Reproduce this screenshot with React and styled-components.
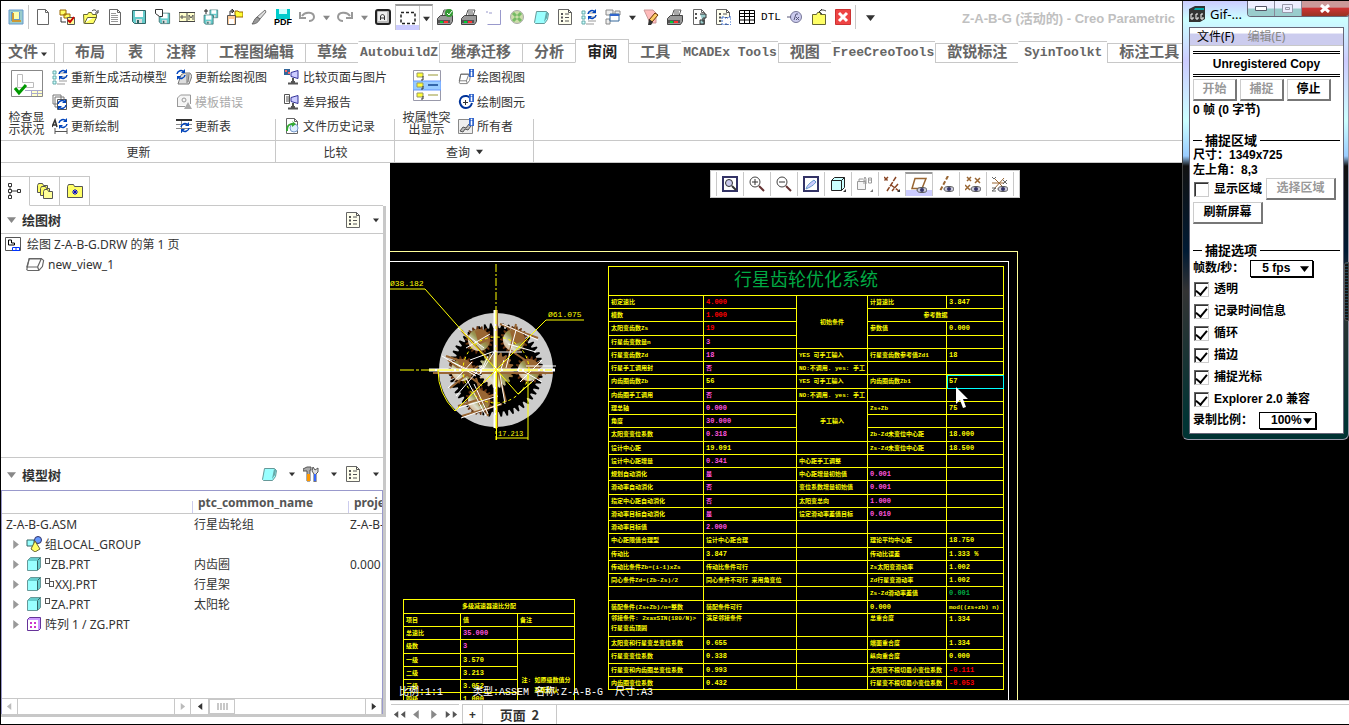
import React from 'react'
import styled, { createGlobalStyle, css } from 'styled-components'

const line = '#c8c8c8'
const yellow = '#ffff00'
const magenta = '#ff55dd'

const GlobalStyle = createGlobalStyle`
  * {
    box-sizing: border-box;
  }
  body {
    margin: 0;
    background: #fff;
    color: #333;
    font-family: "Noto Sans", "Noto Sans CJK SC", sans-serif;
    font-size: 12px;
  }
  button, input, select {
    font: inherit;
    color: inherit;
    margin: 0;
  }
  button {
    padding: 0;
    border: 0;
    background: none;
  }
`

const AppStyles = styled.div`
  position: relative;
  display: flex;
  flex-direction: column;
  min-height: 100vh;
  border: 1px solid #000;
  border-right: 0;
  overflow: hidden;
`

/* ---------- icons ---------- */

const page = (
  <path d="M2.5 .5h8l3 3v12h-11zM10.500 .5v3h3" fill="#fff" stroke="#666" />
)
const sync = (x, y) => (
  <g transform={`translate(${x} ${y})`} fill="none" stroke="#0044bb" strokeWidth="1.500">
    <path d="M1 5a4 4 0 0 1 7-2M9 6a4 4 0 0 1-7 2" />
    <path d="M9 0v4h-4zM1 11v-4h4z" fill="#0044bb" stroke="none" />
  </g>
)
const printer = (
  <>
    <path d="M5 7l2-6h7l-2 6" fill="#fff" stroke="#555" />
    <path d="M7 3h5M7 5h5" stroke="#555" />
    <path d="M.5 9.500l3-3h12v6l-2 3h-13z" fill="#999" stroke="#444" />
    <path d="M1 11h12v3h-12z" fill="#555" />
    <path d="M3 12h3v2h-3z" fill="#00cc33" />
    <path d="M7 12h4v2h-4z" fill="#ff3333" />
  </>
)
const disk = (
  <>
    <path d="M1.500 1.500h13v13h-11l-2-2z" fill="#66cccc" stroke="#336666" />
    <path d="M4 2h8v6h-8z" fill="#fff" />
    <path d="M5 10h6v4h-6z" fill="#ddd" />
    <path d="M6 11h2v3h-2z" fill="#336666" />
  </>
)
const folder = (
  <path d="M1 14.500l-.5-9h4l1-2h3l1 2h4v3h-9l-3 6h9l3-6h-3" fill="#ffff66" stroke="#666633" />
)
const cube = (
  <>
    <path d="M1.500 4.500l3-3h10v10l-3 3h-10z" fill="#66cccc" stroke="#669999" />
    <path d="M2 5h9v9h-9z" fill="#99ffff" />
    <path d="M11.500 4.500l3-3M11.500 5v9" stroke="#336666" />
  </>
)
const slab = (
  <>
    <path d="M1.500 13.500l2-11h10l2 2-1 6-3 4h-9z" fill="#fff" stroke="#666" />
    <path d="M3.500 3l-2 8h9l3-8zM10.500 11l1 3" fill="none" stroke="#666" />
  </>
)
const info = (
  <>
    <path d="M11 0h5v8h-5z" fill="#3366cc" />
    <path d="M13 1h1v1h-1zM13 3h1v4h-1z" fill="#fff" stroke="#fff" strokeWidth=".5" />
  </>
)
const list = (
  <>
    <path d="M1.500 .5h10l3 3v12h-13z" fill="#ffffee" stroke="#666" />
    <path d="M11.500 .5v3h3M8 5h4M8 8.500h4M8 12h4" fill="none" stroke="#555" />
    <path d="M4 4h2v2h-2zM4 7.500h2v2h-2zM4 11h2v2h-2z" fill="#555" />
  </>
)
const eye = (
  <>
    <ellipse cx="11" cy="13" rx="5" ry="2.500" fill="#ccccdd" stroke="#555" />
    <circle cx="11" cy="13" r="2" fill="#333366" />
  </>
)
const monitor = (
  <>
    <path d="M7 3.500l7-2v8l-7-2z" fill="#ccccff" stroke="#333399" />
    <path d="M9 9v4M4 14.500h10M7 13h4" stroke="#555" strokeWidth="2" />
  </>
)
const checkList = (
  <>
    <path d="M7 4h8M7 8h8M7 12h8M5 15h8" stroke="#999" />
    <path d="M1 2h3v3h-3zM1 7h3v3h-3zM1 12h3v3h-3z" fill="#ccffff" stroke="#66aaaa" />
  </>
)

const icons = {
  app: (
    <>
      <path d="M1 1h14v14h-14z" fill="#99cccc" stroke="#6699cc" />
      <path d="M3 3h9v9h-9z" fill="#6699cc" />
      <path d="M5 3h6v7h-6z" fill="#ffffaa" />
      <path d="M4 4h2v7h7v2h-9z" fill="#cc9933" />
    </>
  ),
  page,
  check2: (
    <>
      <path d="M1 1h6v5h-6zM5 5h6v4h-6z" fill="#ffff66" stroke="#996600" />
      <path d="M2 8v5h5" fill="none" stroke="#333" />
      <path d="M8.500 8.500h7v7h-7z" fill="#ffff99" stroke="#555" />
      <path d="M9 11l2 2 4-5" fill="none" stroke="#cc0000" strokeWidth="2" />
    </>
  ),
  open: (
    <>
      {folder}
      <path d="M9 2c2-2 4-1 5 1M15 1v3h-3" fill="none" stroke="#333" />
    </>
  ),
  text: (
    <>
      {page}
      <path d="M4 4.500h5M4 6.500h7M4 8.500h7M4 10.500h7M4 12.500h7" stroke="#999" />
    </>
  ),
  disk,
  saveAs: (
    <>
      <g transform="translate(3 3) scale(.8)">{disk}</g>
      <path d="M.5 .5h7v7h-3l-4-3z" fill="#fff" stroke="#333" />
    </>
  ),
  model: (
    <>
      <path d="M0 3.500h16v9h-16zM8 4v9" fill="#ffffcc" stroke="#444" />
      <path d="M1 8h6M3 6v4M10 11v-5l2 3 2-3v5" fill="none" stroke="#555" />
    </>
  ),
  backup: (
    <>
      <g transform="translate(6 0) scale(.6)">{disk}</g>
      <g transform="translate(0 5) scale(.7)">{disk}</g>
      <path d="M3 0v5M1 2h4" stroke="#222" />
    </>
  ),
  export: (
    <>
      <path d="M8 2h3l1 1h4v5h-8z" fill="#ffff33" stroke="#996600" />
      <path d="M.5 6.500h8v9h-8z" fill="#ffcc99" stroke="#555" />
      <path d="M3 6v-4h3M5 0v4l2-2z" fill="none" stroke="#333" />
      <path d="M2 10h5v5h-5z" fill="#fff" />
    </>
  ),
  brush: (
    <>
      <path d="M14 1l1 2-6 7-3-2z" fill="#ddd" stroke="#777" />
      <path d="M6 8l3 2c-2 4-5 5-8 5 2-2 2-5 5-7z" fill="#999" stroke="#666" />
    </>
  ),
  undo: <path d="M3 7c3-5 12-4 12 1 0 3-3 4-5 4M1 3v6h6" fill="none" stroke="#999" strokeWidth="2" />,
  redo: <path d="M13 7c-3-5-12-4-12 1 0 3 3 4 5 4M15 3v6h-6" fill="none" stroke="#999" strokeWidth="2" />,
  key: (
    <>
      <rect x="1" y="1" width="14" height="14" rx="2" fill="#bbb" stroke="#222" strokeWidth="2" />
      <rect x="3" y="3" width="9" height="9" fill="#eee" />
      <path d="M5.500 11v-4l2-2 2 2v4M6 9h4" fill="none" stroke="#333" />
    </>
  ),
  marquee: <path d="M1 2.500h14v11h-14z" fill="none" stroke="#222" strokeWidth="1.500" strokeDasharray="3 2" />,
  printer,
  printOk: (
    <>
      {printer}
      <circle cx="12" cy="4" r="4" fill="#339933" />
      <path d="M10 4l2 2 3-4" fill="none" stroke="#fff" />
    </>
  ),
  blank: <path d="M1 3h2M4 4h3M15.500 1v14.500h-13" fill="none" stroke="#9999cc" />,
  ball: (
    <>
      <circle cx="8" cy="8" r="6.500" fill="#ccddaa" stroke="#aaa" />
      <path d="M4 4l3 3M12 4l-3 3M4 12l3-3M12 12l-3-3" stroke="#77bb66" strokeWidth="3" />
    </>
  ),
  slabBlue: (
    <>
      <path d="M1.500 13.500l2-11h10l2 2-1 6-3 4h-9z" fill="#99ffff" stroke="#669999" />
      <path d="M13 3l-2 10 3-4 1-5z" fill="#66aaaa" />
    </>
  ),
  list,
  regen: (
    <>
      {checkList}
      {sync(6, 0)}
    </>
  ),
  windows: (
    <>
      <path d="M1 1h7v5h-7zM10 2h5v4h-5zM1 10h4v5h-4z" fill="#eee" stroke="#888" />
      <path d="M5 5h9v7h-9z" fill="#fff" stroke="#336699" />
      <path d="M5 5h9v2h-9z" fill="#3366cc" />
    </>
  ),
  eraser: (
    <>
      <path d="M1 1h9l3 3v10h-6z" fill="#ffbbbb" stroke="#cc9999" />
      <path d="M12 4l3 2-6 7-3-2z" fill="#ffcc66" stroke="#663300" />
      <path d="M6 10l4 3-2 3h-3z" fill="#333" />
    </>
  ),
  docTool: (
    <>
      {page}
      <path d="M4 4h2v2h-2zM4 8h2v2h-2z" fill="#555" />
      <path d="M9 5h6v4h-3v4M9 11h4v4h-4z" fill="#99cccc" stroke="#333" />
    </>
  ),
  docShape: (
    <>
      {list}
      <path d="M7 8h3v1h3v-1h3v8h-3v-1h-3v1h-3z" fill="#fff" stroke="#3366cc" strokeDasharray="2 1" />
    </>
  ),
  grid: <path d="M.5 1.500h15v13h-15zM.5 4.500h15M.5 7.500h15M.5 11h15M5.500 1.500v13M10.500 1.500v13" fill="#fff" stroke="#000" />,
  gauge: (
    <>
      <circle cx="9" cy="8" r="5.500" fill="#ccccee" stroke="#777799" />
      <path d="M0 8h4M7 11l2-6h2M9 8l3 3M12 8l-3 3" fill="none" stroke="#555577" />
    </>
  ),
  folderBack: (
    <>
      <path d="M1.500 5.500h4l1-2h3v2h5v10h-13z" fill="#ffff66" stroke="#666633" />
      <path d="M8 3c2-3 5-2 7-1M11 0l-3 3 3 2" fill="none" stroke="#333" />
    </>
  ),
  close: (
    <>
      <path d="M.5 .5h15v15h-15z" fill="#ee4444" stroke="#cc3333" />
      <path d="M4 4l8 8M12 4l-8 8" stroke="#fff" strokeWidth="3" />
    </>
  ),
  updateSheet: (
    <>
      <path d="M1 1h8v9h-8zM3 3h9v10h-9z" fill="#fff" stroke="#777" />
      <path d="M5.500 5.500h9v10h-9z" fill="#fff" stroke="#555" />
      {sync(5, 5)}
    </>
  ),
  updateDraft: (
    <>
      <path d="M0 9l3-7 2 7M1 7h4" fill="none" stroke="#333" strokeWidth="1.500" />
      {sync(6, 0)}
      <path d="M3 10v6M15 10v6M3 13.500h12" fill="none" stroke="#555" />
    </>
  ),
  updateView: (
    <>
      <path d="M5 6l3-2h6l2 3-3 8h-11z" fill="#ddd" stroke="#777" />
      <path d="M11 5v9M13 5l-1 8" stroke="#777" />
      {sync(0, 0)}
    </>
  ),
  tplError: (
    <>
      <path d="M1.500 12v-8l3-3h10v9" fill="#f5f5f5" stroke="#999" />
      <path d="M1 12.500h8" stroke="#999" />
      <circle cx="8" cy="6" r="2" fill="none" stroke="#999" />
      <path d="M12 8l4 7h-8z" fill="#aaa" />
    </>
  ),
  updateTable: (
    <>
      <path d="M0 2.500h16M0 6.500h16M0 10.500h16M5.500 2v13" stroke="#888" />
      <path d="M0 1h16v2h-16z" fill="#333" />
      {sync(4, 4)}
    </>
  ),
  comparePic: (
    <>
      {monitor}
      <path d="M0 0h6v6h-6z" fill="#336699" />
      <path d="M1 1h2v2h-2zM4 3h2v2h-2z" fill="#ff6666" />
    </>
  ),
  diff: (
    <>
      {monitor}
      <path d="M.5 .5h5v9h-5z" fill="#fff" stroke="#555" />
      <path d="M2 3h3M2 5h3M2 7h3" stroke="#555" />
    </>
  ),
  history: (
    <>
      {page}
      <circle cx="10" cy="10" r="4" fill="#ddeeff" stroke="#7799cc" />
      <path d="M2 13c0-6 3-8 7-8l-1-2 4 3-4 3v-2c-3 0-4 2-4 6z" fill="#33aa33" />
    </>
  ),
  viewInfo: (
    <>
      <g transform="translate(0 3) scale(.8)">{slab}</g>
      {info}
    </>
  ),
  draftInfo: (
    <>
      <path d="M12 4c-1-2-5-3-8-1-4 3-2 11 4 11 3 0 5-2 6-5" fill="none" stroke="#003399" strokeWidth="2" />
      <path d="M5 8.500h5M7.500 6v5" stroke="#333" />
      {info}
    </>
  ),
  ownerInfo: (
    <>
      <path d="M.5 1.500h14v14h-14z" fill="#eee" stroke="#888" />
      <path d="M2 13l3-4 3 1 3-4 2 2-3 4-3-1-2 3z" fill="#bbb" stroke="#555" />
      {info}
    </>
  ),
  structure: (
    <path d="M1.500 .5h3v3h-3zM1.500 6.500h3v3h-3zM1.500 12.500h3v3h-3zM10.500 6.500h3v3h-3zM3 4v2M3 10v2M5 8h5" fill="#fff" stroke="#333" />
  ),
  folders: (
    <>
      <path d="M.5 2.500l1-2h4l1 2h4v7h-10z" fill="#ffff66" stroke="#555" />
      <path d="M3.500 5.500l1-2h4l1 2h3v7h-9z" fill="#ffff66" stroke="#555" />
      <path d="M6.500 8.500l1-2h3l1 2h4v7h-9z" fill="#ffff99" stroke="#555" />
    </>
  ),
  favorite: (
    <>
      <path d="M.5 3.500l1-2h5l1 2h8v11h-15z" fill="#ffff66" stroke="#555" />
      <path d="M8 6v6M5 9h6M6 7l4 4M10 7l-4 4" stroke="#0000cc" />
    </>
  ),
  drawing: (
    <>
      <path d="M.5 1.500h15v13h-15z" fill="#fff" stroke="#555" />
      <path d="M3.500 4v5h6v-2h-3v-3z" fill="none" stroke="#000" />
      <path d="M7.500 11.500h7v3h-7zM11 11v3" fill="none" stroke="#0033ff" />
    </>
  ),
  slab: <g transform="scale(1.200 1)">{slab}</g>,
  cube,
  group: (
    <>
      <path d="M1 4h7v6h-7z" fill="#99ffff" stroke="#336666" />
      <circle cx="12" cy="4" r="3.500" fill="#6699ff" stroke="#336" />
      <path d="M9 5l5 8-5 3-4-3z" fill="#ffff66" stroke="#663" />
    </>
  ),
  pattern: (
    <>
      <path d="M1.500 3.500l2-2h11v11l-2 2h-11z" fill="#cc99ff" stroke="#663399" />
      <path d="M2 4h10v10h-10z" fill="#fff" />
      <path d="M4 6h2v2h-2zM8 6h2v2h-2zM4 10h2v2h-2zM8 10h2v2h-2z" fill="#cc33cc" />
    </>
  ),
  tools: (
    <>
      <path d="M0 3l4-2h4v3h-1v11h-3v-10h-4z" fill="#aaa" stroke="#555" />
      <path d="M4 8h3v7h-3z" fill="#ff9900" />
      <path d="M10 1l2 3 3-2v4l-2 2v8h-2v-8l-2-3z" fill="#ddd" stroke="#555" />
      <path d="M11 8h2v7h-2z" fill="#3366ff" />
    </>
  ),
  zoomFit: (
    <>
      <path d="M1 1h14v14h-14z" fill="#fff" stroke="#336" strokeWidth="2" />
      <circle cx="7" cy="7" r="3.500" fill="#cce" stroke="#333" />
      <path d="M10 10l4 4" stroke="#333" strokeWidth="2" />
    </>
  ),
  zoomIn: (
    <>
      <circle cx="6" cy="6" r="5" fill="#fff" stroke="#444" />
      <path d="M3 6h6M6 3v6" stroke="#333" />
      <path d="M10 10l5 5" stroke="#663333" strokeWidth="2" />
    </>
  ),
  zoomOut: (
    <>
      <circle cx="6" cy="6" r="5" fill="#fff" stroke="#444" />
      <path d="M3 6h6" stroke="#333" />
      <path d="M10 10l5 5" stroke="#663333" strokeWidth="2" />
    </>
  ),
  repaint: (
    <>
      <path d="M1 1h14v14h-14z" fill="#fff" stroke="#333366" strokeWidth="2" />
      <path d="M3 13c1-4 4-6 8-9l2 2c-3 4-6 5-10 7z" fill="#ccccff" stroke="#6699cc" />
    </>
  ),
  display: (
    <>
      <path d="M1.500 4.500l3-3h10v10l-3 3h-10zM1.500 4.500h10v10M11.500 4.500l3-3" fill="#ccffff" stroke="#222" />
      <path d="M16 13v3h-3z" fill="#333" />
    </>
  ),
  annotation: (
    <>
      <path d="M.5 5.500h8v8h-8zM2 5v-2h4" fill="#f5f5f5" stroke="#999" />
      <path d="M7 8v-5l1-2 1 2v5M7 5h2M11.500 2v5h3v-5zM11.500 4h3" fill="none" stroke="#999" />
      <path d="M16 13v3h-3z" fill="#777" />
    </>
  ),
  datum: (
    <>
      <path d="M0 1l4 4M4 1l-4 4M7 9l8 6M14 8l-6 7M12 1l-9 14" stroke="#884422" strokeWidth="1.500" strokeDasharray="5 1" />
      <path d="M16 13v3h-3z" fill="#333" />
    </>
  ),
  plane: (
    <>
      <path d="M4 1.500h11l-4 10h-10z" fill="none" stroke="#996633" strokeWidth="1.500" />
      {eye}
    </>
  ),
  axis: (
    <>
      <path d="M10 0l-8 15" stroke="#996633" strokeWidth="2" strokeDasharray="4 2" />
      {eye}
    </>
  ),
  points: (
    <>
      <path d="M2 1l4 4M6 1l-4 4M10 2l5 5M15 2l-5 5M0 9l5 5M5 9l-5 5" stroke="#996633" strokeWidth="1.500" />
      {eye}
    </>
  ),
  csys: (
    <>
      <path d="M2 2l9 9M12 2l-10 11M0 7h12" stroke="#996633" />
      <path d="M0 1l2 2 2-2M11 4l4 4M15 4l-4 4M0 12h4l-4 3h4" fill="none" stroke="#666" />
      {eye}
    </>
  ),
  gif: (
    <>
      <path d="M0 3l6-3h10v13l-5 3h-11z" fill="#333" />
      <path d="M6 2h9v2h-10z" fill="#00aaaa" />
      <path d="M4 8h-2v5h2v-2M9 8h-2v5h2v-2M14 8h-2v5h2v-2" fill="none" stroke="#fff" />
    </>
  ),
  status: (
    <>
      <path d="M.5 .5h31v26h-31z" fill="#fff" stroke="#888" />
      <path d="M6.500 4.500h5v8h11v5h-16z" fill="none" stroke="#bbb" />
      <path d="M20 20h11v6h-11z" fill="#ffffcc" />
      <path d="M14 20.500h17M20 23.500h11M20.500 20v6M26.500 20v6" stroke="#aac" />
      <path d="M4 18l4 5 7-8" fill="none" stroke="#009900" strokeWidth="3" />
    </>
  ),
  highlight: (
    <>
      <path d="M.5 .5h27v30h-27z" fill="#fff" stroke="#99a" />
      <path d="M0 11h28v9h-28z" fill="#99ccff" stroke="#6699ff" />
      <path d="M4 3h6v4h-6zM4 13h6v4h-6zM4 23h6v4h-6z" fill="#ffff33" stroke="#996" />
      <path d="M15 5h10M15 25h10" stroke="#cccc99" strokeWidth="2" />
      <path d="M15 15h10" stroke="#3366aa" strokeWidth="2" />
      <path d="M10 6v4h-2M10 16v3h-2M10 26v3h-2" fill="none" stroke="#333" />
    </>
  ),
}

const IconStyles = styled.svg`
  display: block;
  flex: none;
`

const Icon = ({ name, width = 16, height = 16 }) => (
  <IconStyles width={width} height={height} viewBox={`0 0 ${width} ${height}`} aria-hidden="true">
    {icons[name]}
  </IconStyles>
)

const Arrow = ({ color = '#333', dir = 'down', size = 7 }) => {
  const turn = { down: 0, left: 90, up: 180, right: 270 }[dir]
  return (
    <IconStyles width={size} height={size} viewBox="0 0 8 8" aria-hidden="true">
      <path d="M0 2h8l-4 5z" fill={color} transform={`rotate(${turn} 4 4)`} />
    </IconStyles>
  )
}

/* ---------- quick access toolbar ---------- */

const QuickBar = styled.header`
  display: flex;
  align-items: center;
  height: 38px;
  padding: 0 0 6px 3px;
  white-space: nowrap;
`

const Slot = styled.button`
  display: flex;
  flex: none;
  align-items: center;
  justify-content: center;
  width: ${(props) => (props.$narrow ? 14 : 24)}px;
  height: 24px;
`

const SlotText = styled.span`
  color: #000;
  font: 11px/16px "Liberation Mono", monospace;
`

const Divider = styled.i`
  flex: none;
  width: 3px;
  height: 24px;
  border-left: 1px solid ${line};
`

const Picker = styled.div`
  display: flex;
  flex: none;
  width: 38px;
  border: 1px solid ${line};
  border-top: 2px solid #999;
  border-bottom: 0;

  button:first-child {
    width: 24px;
    background: linear-gradient(#fff 80%, #ccccff 80%);
    border-right: 1px solid ${line};
  }
  button:last-child {
    width: 12px;
  }
`

const WindowTitle = styled.h1`
  margin: 0 0 0 80px;
  font: bold 13px "Liberation Sans", "Noto Sans CJK SC", sans-serif;
  color: #c0c0c0;
`

const firstTools = ['page', 'check2', 'open', 'text', 'disk', 'saveAs', 'model', 'backup', 'export', 'brush']
const midTools = ['printOk', 'printer', 'blank', 'ball', 'slabBlue', 'list', 'regen', 'windows']
const lastTools = ['eraser', 'printer', 'docTool', 'docShape', 'grid', 'dtl', 'gauge', 'folderBack', 'close']

const Tool = ({ name }) => (
  <Slot aria-label={name}>{name === 'dtl' ? <SlotText>DTL</SlotText> : <Icon name={name} />}</Slot>
)

const PdfIcon = () => (
  <IconStyles width="18" height="18" viewBox="0 0 18 18">
    <path d="M2 1h14v10h-14z" fill="#00cccc" />
    <path d="M5 1h8v5h-8z" fill="#ccffff" />
    <text x="0" y="17" fontSize="9" fontWeight="bold" fontFamily="Liberation Sans">PDF</text>
  </IconStyles>
)

const QuickAccess = () => (
  <QuickBar>
    <Tool name="app" />
    <Divider />
    {firstTools.map((name) => <Tool key={name} name={name} />)}
    <Slot aria-label="pdf"><PdfIcon /></Slot>
    <Tool name="undo" />
    <Slot $narrow aria-label="undo list"><Arrow color="#888" /></Slot>
    <Tool name="redo" />
    <Slot $narrow aria-label="redo list"><Arrow color="#888" /></Slot>
    <Tool name="key" />
    <Picker>
      <Slot aria-label="select"><Icon name="marquee" /></Slot>
      <Slot $narrow aria-label="select list"><Arrow /></Slot>
    </Picker>
    {midTools.map((name) => <Tool key={name} name={name} />)}
    <Slot $narrow aria-label="windows list"><Arrow /></Slot>
    {lastTools.map((name) => <Tool key={name} name={name} />)}
    <Divider />
    <Slot aria-label="customize"><Arrow size={9} /></Slot>
    <WindowTitle>Z-A-B-G (活动的) - Creo Parametric</WindowTitle>
  </QuickBar>
)

/* ---------- ribbon ---------- */

const TabBar = styled.nav`
  display: flex;
  align-items: flex-end;
  height: 24px;
  overflow: hidden;
  background: linear-gradient(${line}, ${line}) left bottom / 100% 1px no-repeat;
`

const Tab = styled.button`
  display: flex;
  flex: none;
  align-items: center;
  justify-content: center;
  gap: 3px;
  height: 20px;
  padding: 2px 11px 0;
  border: solid ${line};
  border-width: 1px 0 1px 1px;
  background: #fff;
  color: #666;
  font: bold 15px/16px "Liberation Mono", "Noto Sans CJK SC", monospace;
  white-space: nowrap;

  ${(props) =>
    props.$plain &&
    css`
      height: 22px;
      padding: 2px ${props.$wide ? 5 : 1}px 0;
      border-bottom-color: #fff;
      border-left-color: #fff;
      font-size: 13px;
    `}
  ${(props) =>
    props.$active &&
    css`
      height: 24px;
      margin-right: -1px;
      padding-top: 6px;
      border-bottom-color: #fff;
      border-right-width: 1px;
      color: #222;
    `}
  ${(props) =>
    props.$file &&
    css`
      width: 54px;
      margin-right: 8px;
      padding: 2px 6px 0;
      border-width: 1px 1px 1px 0;
    `}
`

const tabs = [
  { text: '布局' },
  { text: '表' },
  { text: '注释' },
  { text: '工程图编辑' },
  { text: '草绘' },
  { text: 'AutobuildZ', plain: true },
  { text: '继承迁移' },
  { text: '分析' },
  { text: '审阅', active: true },
  { text: '工具' },
  { text: 'MCADEx Tools', plain: true },
  { text: '视图' },
  { text: 'FreeCreoTools', plain: true },
  { text: '歆锐标注' },
  { text: 'SyinToolkt', plain: true, wide: true },
  { text: '标注工具' },
]

const RibbonStyles = styled.section`
  display: flex;
  height: 100px;
  border-bottom: 1px solid ${line};
`

const Group = styled.div`
  display: flex;
  flex-direction: column;
  width: ${(props) => props.$width};
  ${(props) => props.$width === 'auto' && 'flex: 1;'}
  background: linear-gradient(${line}, ${line}) right bottom / 1px 43px no-repeat;
`

const GroupBody = styled.div`
  display: flex;
  height: 78px;
  padding-top: 2px;
  border-bottom: 1px solid ${line};
`

const GroupTitle = styled.div`
  display: flex;
  flex: 1;
  align-items: center;
  justify-content: center;
  gap: 6px;
  color: #333;
`

const BigButton = styled.button`
  display: flex;
  flex-direction: column;
  align-items: center;
  justify-content: space-between;
  width: ${(props) => props.$width}px;
  padding: 5px 0 4px;
  color: #333;
  font-size: 12px;
  line-height: 12px;
`

const ButtonColumn = styled.div`
  display: flex;
  flex-direction: column;
  justify-content: space-between;
  height: 73px;
  width: ${(props) => props.$width}px;
  padding-left: ${(props) => props.$pad || 0}px;
`

const SmallButton = styled.button`
  display: flex;
  align-items: center;
  gap: 3px;
  height: 24px;
  color: #333;
  white-space: nowrap;

  &:disabled {
    color: #aaa;
  }
`

const Commands = ({ items, width, pad }) => (
  <ButtonColumn $width={width} $pad={pad}>
    {items.map(([icon, text, disabled]) => (
      <SmallButton key={text} disabled={disabled}>
        <Icon name={icon} />
        {text}
      </SmallButton>
    ))}
  </ButtonColumn>
)

const Ribbon = () => (
  <>
    <TabBar>
      <Tab $file>
        文件
        <Arrow size={6} />
      </Tab>
      {tabs.map((tab) => (
        <Tab key={tab.text} $plain={tab.plain} $wide={tab.wide} $active={tab.active}>
          {tab.text}
        </Tab>
      ))}
    </TabBar>
    <RibbonStyles>
      <Group $width="275px">
        <GroupBody>
          <BigButton $width={51}>
            <Icon name="status" width={32} height={27} />
            <span>检查显<br />示状况</span>
          </BigButton>
          <Commands
            width={124}
            items={[['regen', '重新生成活动模型'], ['updateSheet', '更新页面'], ['updateDraft', '更新绘制']]}
          />
          <Commands
            width={100}
            items={[['updateView', '更新绘图视图'], ['tplError', '模板错误', true], ['updateTable', '更新表']]}
          />
        </GroupBody>
        <GroupTitle>更新</GroupTitle>
      </Group>
      <Group $width="119px">
        <GroupBody>
          <Commands
            width={118}
            pad={8}
            items={[['comparePic', '比较页面与图片'], ['diff', '差异报告'], ['history', '文件历史记录']]}
          />
        </GroupBody>
        <GroupTitle>比较</GroupTitle>
      </Group>
      <Group $width="139px">
        <GroupBody>
          <BigButton $width={63}>
            <Icon name="highlight" width={28} height={31} />
            <span>按属性突<br />出显示</span>
          </BigButton>
          <Commands
            width={75}
            items={[['viewInfo', '绘图视图'], ['draftInfo', '绘制图元'], ['ownerInfo', '所有者']]}
          />
        </GroupBody>
        <GroupTitle>
          查询
          <Arrow />
        </GroupTitle>
      </Group>
      <Group $width="auto">
        <GroupBody />
      </Group>
    </RibbonStyles>
  </>
)

/* ---------- left navigator ---------- */

const Workspace = styled.main`
  display: flex;
  flex: 1;
`

const Navigator = styled.aside`
  display: flex;
  flex: none;
  flex-direction: column;
  width: 389px;
  padding: 13px 4px 7px 0;
`

const NavTabs = styled.div`
  display: flex;
  height: 30px;
  background: linear-gradient(${line}, ${line}) left bottom / 382px 1px no-repeat;
`

const NavTab = styled.button`
  display: flex;
  align-items: center;
  justify-content: center;
  width: 30px;
  border: 1px solid ${line};
  border-width: 1px 1px 1px 0;
  background: #fff;
  ${(props) => props.$active && 'border-bottom-color: #fff; width: 29px;'}
`

const NavBody = styled.div`
  display: flex;
  flex: 1;
  flex-direction: column;
  border: solid ${line};
  border-width: 0 3px 3px 0;
`

const PanelHead = styled.div`
  display: flex;
  flex: none;
  align-items: center;
  height: ${(props) => props.$height}px;
  padding: 0 4px 0 6px;
  ${(props) => props.$ruled && `border-bottom: 1px solid ${line};`}

  h2 {
    flex: 1;
    margin: 0 0 0 6px;
    font-size: 13px;
    color: #333;
  }
  button {
    justify-content: flex-end;
  }
  button:nth-last-child(odd) {
    width: 18px;
  }
`

const DrawTree = styled.div`
  flex: none;
  height: 224px;
  border-bottom: 1px solid ${line};
`

const TreeItem = styled.div`
  display: flex;
  align-items: center;
  gap: ${(props) => (props.$child ? 3 : 6)}px;
  height: 20px;
  padding-left: ${(props) => (props.$child ? 24 : 4)}px;
`

const ModelBox = styled.div`
  display: flex;
  flex: 1;
  flex-direction: column;
  border: 1px solid #9999cc;
  border-bottom: 0;
  overflow: hidden;
`

const ModelTable = styled.table`
  width: 380px;
  table-layout: fixed;
  border-spacing: 0;
  font-size: 12px;
  white-space: nowrap;

  th {
    height: 23px;
    padding: 0 0 0 6px;
    border-bottom: 1px solid ${line};
    background: linear-gradient(#ccccee, #ccccee) left bottom / 1px 12px no-repeat;
    color: #555;
    font-size: 12px;
    text-align: left;
    overflow: hidden;
  }
  th:first-child {
    background: none;
  }
  td {
    height: 20px;
    padding: 0 0 0 2px;
    overflow: hidden;
  }
`

const ModelName = styled.div`
  display: flex;
  align-items: center;
  padding-left: ${(props) => (props.$root ? 2 : 7)}px;

  svg + svg {
    margin: 0 3px 0 6px;
  }
`

const Mark = styled.i`
  align-self: flex-start;
  width: 5px;
  height: 6px;
  margin: 2px 1px 0 0;
  border: 1px solid #555;

  & + & {
    margin: 5px 1px 0 -2px;
    background: #fff;
  }
`

const Scrolls = styled.div`
  display: flex;
  gap: 2px;
  height: 16px;
  margin-top: auto;
  border-top: 1px solid ${line};
`

const ScrollBar = styled.div`
  display: flex;
  flex: 1;
  justify-content: space-between;
  border-right: 1px solid ${line};

  button {
    display: flex;
    align-items: center;
    justify-content: center;
    width: 16px;
    border: solid ${line};
    border-width: 0 1px 0 0;
  }
  button:last-child {
    border-width: 0 0 0 1px;
  }
`

const Thumb = styled.i`
  width: 26px;
  margin-right: auto;
  border: 1px solid ${line};
  background: repeating-linear-gradient(90deg, ${line} 0 2px, #fff 2px 3px) center / 11px 7px no-repeat;
`

const parts = [
  { icon: 'group', name: '组LOCAL_GROUP' },
  { icon: 'cube', name: 'ZB.PRT', marks: 1, label: '内齿圈', project: '0.000' },
  { icon: 'cube', name: 'XXJ.PRT', marks: 2, label: '行星架' },
  { icon: 'cube', name: 'ZA.PRT', marks: 1, label: '太阳轮' },
  { icon: 'pattern', name: '阵列 1 / ZG.PRT' },
]

const LeftNavigator = () => (
  <Navigator>
    <NavTabs>
      <NavTab $active aria-label="tree"><Icon name="structure" /></NavTab>
      <NavTab aria-label="folders"><Icon name="folders" /></NavTab>
      <NavTab aria-label="favorites"><Icon name="favorite" /></NavTab>
    </NavTabs>
    <NavBody>
      <PanelHead $height={28} $ruled>
        <Arrow color="#888" size={9} />
        <h2>绘图树</h2>
        <Slot aria-label="settings"><Icon name="list" /></Slot>
        <Slot aria-label="settings list"><Arrow size={6} /></Slot>
      </PanelHead>
      <DrawTree>
        <TreeItem>
          <Icon name="drawing" />
          绘图 Z-A-B-G.DRW 的第 1 页
        </TreeItem>
        <TreeItem $child>
          <Icon name="slab" width={20} />
          new_view_1
        </TreeItem>
      </DrawTree>
      <PanelHead $height={32}>
        <Arrow color="#888" size={9} />
        <h2>模型树</h2>
        <Slot aria-label="show"><Icon name="slabBlue" /></Slot>
        <Slot aria-label="show list"><Arrow size={6} /></Slot>
        <Slot aria-label="tools"><Icon name="tools" /></Slot>
        <Slot aria-label="tools list"><Arrow size={6} /></Slot>
        <Slot aria-label="settings"><Icon name="list" /></Slot>
        <Slot aria-label="settings list"><Arrow size={6} /></Slot>
      </PanelHead>
      <ModelBox>
        <ModelTable>
          <colgroup>
            <col width="190" />
            <col width="156" />
            <col />
          </colgroup>
          <thead>
            <tr>
              <th />
              <th>ptc_common_name</th>
              <th>project</th>
            </tr>
          </thead>
          <tbody>
            <tr>
              <td><ModelName $root>Z-A-B-G.ASM</ModelName></td>
              <td>行星齿轮组</td>
              <td>Z-A-B-G</td>
            </tr>
            {parts.map((part) => (
              <tr key={part.name}>
                <td>
                  <ModelName>
                    <Arrow color="#999" dir="right" size={9} />
                    <Icon name={part.icon} />
                    {part.marks > 0 && <Mark />}
                    {part.marks > 1 && <Mark />}
                    {part.name}
                  </ModelName>
                </td>
                <td>{part.label}</td>
                <td>{part.project}</td>
              </tr>
            ))}
          </tbody>
        </ModelTable>
        <Scrolls>
          <ScrollBar>
            <button aria-label="left"><Arrow color="#bbb" dir="left" /></button>
            <button aria-label="right"><Arrow color="#bbb" dir="right" /></button>
          </ScrollBar>
          <ScrollBar>
            <button aria-label="left"><Arrow dir="left" /></button>
            <Thumb />
            <button aria-label="right"><Arrow dir="right" /></button>
          </ScrollBar>
        </Scrolls>
      </ModelBox>
    </NavBody>
  </Navigator>
)

/* ---------- drawing canvas ---------- */

const Stage = styled.div`
  display: flex;
  flex: 1;
  flex-direction: column;
  min-width: 0;
`

const Canvas = styled.div`
  position: relative;
  flex: 1;
  background: #000;
  overflow: hidden;
`

const Sheet = styled.div`
  position: absolute;
  top: 88px;
  bottom: 0;
  left: 0;
  width: 628px;
  padding: 9px 8px 0 0;
  border: solid #ffff99;
  border-width: 1px 1px 0 0;

  &::before {
    content: '';
    display: block;
    height: 100%;
    border: solid #fff;
    border-width: 1px 1px 0 0;
  }
`

const ViewBar = styled.div`
  position: absolute;
  top: 7px;
  left: 320px;
  display: flex;
  height: 28px;
  padding: 1px 5px;
  border: 1px solid ${line};
  background: #fff;

  button {
    width: 27px;
    height: 24px;
    border-left: 1px solid ${line};
  }
  button:last-child {
    width: 28px;
    border-right: 1px solid ${line};
  }
`

const ViewButton = styled(Slot)`
  ${(props) =>
    props.$on &&
    css`
      border-top: 2px solid #999;
      background: linear-gradient(#fff 75%, #ccccff 75%);
    `}
`

const CadTable = styled.table`
  position: absolute;
  top: ${(props) => props.$top}px;
  left: ${(props) => props.$left}px;
  width: ${(props) => props.$width}px;
  table-layout: fixed;
  border: solid ${yellow};
  border-width: 1px 0 0 1px;
  border-spacing: 0;
  color: ${yellow};
  font: bold 6px/9px "Liberation Mono", "Noto Sans CJK SC", monospace;
  white-space: nowrap;

  td, th {
    height: 13px;
    padding: 0 2px;
    border: solid ${yellow};
    border-width: 0 1px 1px 0;
    font-weight: bold;
    text-align: left;
  }
  tbody tr:nth-child(4n + 3) td {
    height: 14px;
  }
`

const CadTitle = styled.th`
  && {
    height: ${(props) => props.$height}px;
    color: ${(props) => props.$color};
    font-size: ${(props) => props.$size}px;
    font-weight: ${(props) => (props.$size > 10 ? 400 : 700)};
    line-height: 13px;
    text-align: center;
  }
`

const tones = { m: magenta, r: '#ff0000', g: '#00aa44' }

const Cell = styled.td`
  && {
    color: ${(props) => tones[props.$tone] || yellow};
    ${(props) => props.$number && 'font-size: 7px;'}
    ${(props) => props.$center && 'text-align: center;'}
    ${(props) => props.$tall && 'height: 23px; line-height: 10px; white-space: pre; vertical-align: top;'}
    ${(props) => props.$picked && 'outline: 1px solid #00ffff; outline-offset: -1px; border-color: #00ffff;'}
  }
`

// a cell is its text, or { t: text, c: tone, ... }
const m = (t) => ({ t, c: 'm' })
const r = (t) => ({ t, c: 'r' })

const gearRows = [
  ['初定速比', r('4.000'), { t: '初始条件', rows: 4, center: true }, '计算速比', '3.847'],
  ['模数', r('1.000'), { t: '参考数据', cols: 2, center: true }],
  ['太阳变齿数Zs', r('19'), '参数值', '0.000'],
  ['行星齿变数量n', m('3'), '', ''],
  ['行星变齿数Zd', m('18'), 'YES 可手工输入', '行星变齿数参考值Zd1', '18'],
  ['行星手工调用封', m('否'), 'NO:不调用. yes: 手工', '', ''],
  ['内齿圈齿数Zb', '56', 'YES 可手工输入', '内齿圈齿数Zb1', { t: '57', picked: true }],
  ['内齿圈手工调用', m('否'), 'NO:不调用. yes: 手工', '', ''],
  ['理总轴', m('0.000'), { t: '手工输入', rows: 3, center: true }, 'Zs+Zb', '75'],
  ['角度', m('30.000'), '', ''],
  ['太阳变变位系数', m('0.318'), 'Zb-Zd未变位中心距', '18.000'],
  ['设计中心距', '19.091', '', 'Zs-Zd未变位中心距', '18.500'],
  ['设计中心距增量', m('0.341'), '中心距手工调整', '', ''],
  ['规划自动消化', m('是'), '中心距增量初始值', m('0.001'), ''],
  ['滑动率自动消化', m('否'), '变位系数增量初始值', m('0.001'), ''],
  ['指定中心距自动消化', m('否'), '太阳变总向', m('1.000'), ''],
  ['滑动率目标自动消化', m('是'), '设定滑动率差值目标', m('0.010'), ''],
  ['滑动率目标值', m('2.000'), '', '', ''],
  ['中心距限值合理型', '设计中心距合理', '', '理论平均中心距', '18.750'],
  ['传动比', '3.847', '', '传动比误差', '1.333 %'],
  ['传动比条件Zb=(i-1)xZs', '传动比条件可行', '', 'Zs太阳变滑动率', '1.002'],
  ['同心条件Zd=(Zb-Zs)/2', '同心条件不可行 采用角变位', '', 'Zd行星变滑动率', '1.002'],
  ['', '', '', 'Zs-Zd滑动率差值', { t: '0.001', c: 'g' }],
  ['装配条件(Zs+Zb)/n=整数', '装配条件可行', '', '0.000', 'mod((zs+zb) n)'],
  [{ t: '邻接条件: 2xaxSIN(180/N)>\n行星变齿顶圆', tall: true }, { t: '满足邻接条件', tall: true }, '', { t: '总重合度', tall: true }, { t: '1.334', tall: true }],
  ['太阳变和行星变总变位系数', '0.655', '', '端面重合度', '1.334'],
  ['行星变变位系数', '0.338', '', '纵向重合度', '0.000'],
  ['行星变和内齿圈总变位系数', '0.993', '', '太阳变不根切最小变位系数', r('-0.111')],
  ['内齿圈变位系数', '0.432', '', '行星变不根切最小变位系数', r('-0.053')],
]

const stageRows = [
  ['项目', '值', '备注'],
  ['总速比', m('35.000'), ''],
  ['级数', m('3'), ''],
  ['一级', '3.570', { t: '注: 如原级数值分\n系统默认', rows: 6, note: true }],
  ['二级', '3.213'],
  ['三级', '3.052'],
  ['四级', '1.000'],
]

const isNumber = (text) => /^-?[\d.]+( %)?$/.test(text)

const CadRows = ({ rows }) =>
  rows.map((row, i) => (
    <tr key={i}>
      {row.map((item, j) => {
        const cell = typeof item === 'string' ? { t: item } : item
        return (
          <Cell
            key={j}
            rowSpan={cell.rows}
            colSpan={cell.cols}
            $tone={cell.c}
            $number={isNumber(cell.t)}
            $center={cell.center}
            $tall={cell.tall}
            $picked={cell.picked}
          >
            {cell.note ? <Note>{cell.t}</Note> : cell.t}
          </Cell>
        )
      })}
    </tr>
  ))

const Note = styled.div`
  padding-top: 12px;
  line-height: 10px;
  text-align: center;
  white-space: pre;
`

const GearStyles = styled.svg`
  position: absolute;
  top: 90px;
  left: 0;
  font: 8px "Liberation Mono", monospace;
`

const ring = (count, high, low) => {
  const points = []
  for (let i = 0; i < count * 4; i++) {
    const angle = (i / (count * 4)) * Math.PI * 2
    const radius = i % 4 < 2 ? high : low
    points.push(`${(Math.cos(angle) * radius).toFixed(1)},${(Math.sin(angle) * radius).toFixed(1)}`)
  }
  return points.join(' ')
}

const planets = [[-17, -30], [18, -30], [-34, 0], [33, 0], [-17, 31]]

const GearView = () => (
  <GearStyles width="210" height="200" viewBox="0 0 210 200">
    <defs>
      <linearGradient id="metal" x1="0" y1="1" x2="1" y2="0">
        <stop offset="0" stopColor="#cc9966" />
        <stop offset=".3" stopColor="#ddddcc" />
        <stop offset=".5" stopColor="#999955" />
        <stop offset=".7" stopColor="#996633" />
      </linearGradient>
    </defs>
    <g transform="translate(106 117)">
      <circle r="57" fill="#cccccc" />
      <polygon points={ring(48, 47, 42)} fill="#000" />
      <polygon points={ring(19, 18, 15)} fill="url(#metal)" />
      {planets.map(([x, y]) => (
        <g key={`${x} ${y}`} transform={`translate(${x} ${y})`}>
          <polygon points={ring(18, 14, 11)} fill="#663311" />
          <circle r="11" fill="url(#metal)" />
          <path d="M-4-9l7 1 5 9-8 4z" fill="#996633" />
        </g>
      ))}
      <g fill="none" stroke="#996633">
        <path d="M1-60v118M-63 3h120M-35-40l30 32M4-46l38 14M20-46l-8 36M-48-10l34 26M-46 18l28-22M-20 8l12 38M2 0l8 32M-38 36l38-12M-34 46l40-12M14-20l36 24M-50-14l24 8" strokeWidth="2" />
      </g>
      <g fill="none" stroke="#fff">
        <path d="M-1-60v118" strokeWidth="3" />
        <path d="M-67 0h126" strokeWidth="3" />
        <path d="M-38-42l26 20M-30-22l24-14M6-46l36 16M20-40l-10 38M12-26l28 8M-54-14l34 20M-44-8l30 14M-48 18l24-26M-40 26l26-30M22-2l24 14M24 12l22-22M30-4h30M-30 8l20 38M-22 14l14 30M-38 38l40-12M-35 48l40-14M4 4l5 30M-2-18l-14 22 8-18M8-10l-4 12M22 24l16-14M-26-10l22-8h30" />
      </g>
      <g fill="none" stroke={yellow}>
        <path d="M0-106v46" strokeDasharray="8 2 2 2" />
        <path d="M-96 0h40M-56 0h112M0-60v130" strokeDasharray="14 2 3 2" />
        <path d="M-106-81h35L22 24l14-12" />
        <path d="M88-50h-38L-41 41" />
        <path d="M-58 0a58 58 0 0 0 17 41" />
        <circle r="33" strokeDasharray="3 3" />
        <path d="M.5 0v70M32 4v66M0 68h32" />
      </g>
    </g>
    <g fill={yellow}>
      <text x="0" y="33">Ø38.182</text>
      <text x="158" y="64">Ø61.075</text>
      <text x="108" y="183" fontSize="7">17.213</text>
    </g>
  </GearStyles>
)

const SheetInfo = styled.div`
  position: absolute;
  bottom: 0;
  left: 9px;
  color: #fff;
  font: 10px/15px "Liberation Mono", "Noto Sans CJK SC", monospace;
  white-space: pre;
`

const Cursor = styled.svg`
  position: absolute;
  top: 224px;
  left: 566px;
`

const SheetBar = styled.footer`
  display: flex;
  align-items: stretch;
  height: 24px;
  border-top: 1px solid ${line};
  padding: 3px 0 0 1px;

  button {
    display: flex;
    align-items: center;
    justify-content: center;
    width: 17px;
    border-top: 1px solid ${line};
  }
`

const AddSheet = styled.button`
  && {
    width: 21px;
    margin-left: 3px;
    border: 1px solid ${line};
    font-weight: bold;
  }
`

const SheetTab = styled.button`
  && {
    width: 74px;
    border-right: 1px solid ${line};
    font: bold 13px "Noto Sans CJK SC", sans-serif;
    white-space: pre;
  }
`

const SheetRest = styled.i`
  flex: 1;
  border-top: 1px solid ${line};
`

const viewTools = ['zoomFit', 'zoomIn', 'zoomOut', 'repaint', 'display', 'annotation', 'datum', 'plane', 'axis', 'points', 'csys']

const Drawing = () => (
  <Stage>
    <Canvas>
      <Sheet />
      <GearView />
      <CadTable $top={103} $left={218} $width={396}>
        <colgroup>
          <col width="95" />
          <col width="93" />
          <col width="71" />
          <col width="79" />
          <col width="57" />
        </colgroup>
        <thead>
          <tr><CadTitle colSpan={5} $height={29} $size={18} $color="#00aa44">行星齿轮优化系统</CadTitle></tr>
        </thead>
        <tbody><CadRows rows={gearRows} /></tbody>
      </CadTable>
      <CadTable $top={436} $left={13} $width={172}>
        <thead>
          <tr><CadTitle colSpan={3} $height={13} $size={6} $color={yellow}>多级减速器速比分配</CadTitle></tr>
        </thead>
        <tbody><CadRows rows={stageRows} /></tbody>
      </CadTable>
      <SheetInfo>比例:1:1     类型:ASSEM 名称:Z-A-B-G  尺寸:A3</SheetInfo>
      <ViewBar>
        {viewTools.map((name) => (
          <ViewButton key={name} $on={name === 'plane'} aria-label={name}>
            <Icon name={name} />
          </ViewButton>
        ))}
      </ViewBar>
      <Cursor width="12" height="22" viewBox="0 0 12 22">
        <path d="M0 0v17l4-4 3 8 3-1-3-8h5z" fill="#fff" />
      </Cursor>
    </Canvas>
    <SheetBar>
      <button aria-label="first"><Arrow color="#555" dir="left" /><Arrow color="#555" dir="left" /></button>
      <button aria-label="previous"><Arrow color="#888" dir="left" size={9} /></button>
      <button aria-label="next"><Arrow color="#888" dir="right" size={9} /></button>
      <button aria-label="last"><Arrow color="#555" dir="right" /><Arrow color="#555" dir="right" /></button>
      <AddSheet>+</AddSheet>
      <SheetTab>页面  2</SheetTab>
      <SheetRest />
    </SheetBar>
  </Stage>
)

/* ---------- recorder window ---------- */

const Recorder = styled.section`
  position: absolute;
  top: 0;
  right: 0;
  display: flex;
  flex-direction: column;
  width: 167px;
  padding: 0 4px 5px 6px;
  border: 1px solid #99a;
  border-top: 0;
  border-left-color: #444;
  border-radius: 0 0 6px 6px;
  background: linear-gradient(#ccccff 0, #ccffff 18px, #ccccff 60px, #ccffff 120px, #99ccff 155px, #111 165px, #001a33 250px, #333 290px, #003333 420px);
  color: #000;
  font: bold 12px/15px "Liberation Sans", "Noto Sans CJK SC", sans-serif;
  white-space: nowrap;
`

// dark grip that lies over the window's right edge
const Grip = styled.i`
  position: absolute;
  top: 261px;
  right: -1px;
  width: 5px;
  height: 59px;
  border: 1px solid #555;
  border-radius: 3px 0 0 3px;
  background: repeating-linear-gradient(#224455 0 1px, #111 1px 3px);
`

const RecorderTitle = styled.div`
  display: flex;
  align-items: center;
  height: 26px;
  font: 13px "Noto Sans", "Noto Sans CJK SC", sans-serif;
  gap: 5px;
`

const Controls = styled.div`
  display: flex;
  flex: none;
  align-self: flex-start;
  height: 16px;
  margin-left: auto;
  border: 1px solid #667;
  border-top: 0;
  border-radius: 0 0 4px 4px;
  overflow: hidden;

  button {
    display: flex;
    align-items: center;
    justify-content: center;
    width: 27px;
    border-right: 1px solid #889;
    background: linear-gradient(#eeeeff 45%, #99cccc 55%);
  }
  button:last-child {
    width: 47px;
    border: 0;
    background: linear-gradient(#cc9999 40%, #cc3333 50%, #993322);
  }
`

const Client = styled.div`
  display: flex;
  flex: 1;
  flex-direction: column;
  padding: 0 3px 3px;
  border: 1px solid #667;
  background: #fff;
`

const MenuBar = styled.div`
  display: flex;
  gap: 13px;
  height: 18px;
  margin: 0 -3px 5px;
  padding-left: 7px;
  border-bottom: 1px solid ${line};
  background: linear-gradient(#fff 30%, #ccccee 35%);
  font: 12px/17px "Noto Sans", "Noto Sans CJK SC", sans-serif;

  button:last-child {
    color: #888;
  }
`

const Banner = styled.div`
  height: 26px;
  border: double #000;
  border-width: 3px 0;
  line-height: 20px;
  text-align: center;
`

const Row = styled.div`
  display: flex;
  align-items: center;
  gap: ${(props) => props.$gap || 4}px;
  height: ${(props) => props.$height || 22}px;
`

const RaisedButton = styled.button`
  width: ${(props) => props.$width}px;
  height: 22px;
  border: solid;
  border-width: 1px 2px 2px 1px;
  border-color: #ccc #777 #777 #ccc;
  background: #fff;

  &:disabled {
    color: #999;
  }
`

const Legend = styled.h3`
  display: flex;
  align-items: center;
  gap: 3px;
  margin: ${(props) => props.$top}px 0 0;
  font-size: 13px;
  line-height: 15px;

  &::before, &::after {
    content: '';
    width: 9px;
    border-top: 1px solid #000;
  }
  &::after {
    flex: 1;
  }
`

const CheckLabel = styled.label`
  display: flex;
  align-items: center;
  gap: 5px;
  height: 22px;
  padding-left: 1px;

  input {
    display: grid;
    place-items: center;
    width: 15px;
    height: 15px;
    appearance: none;
    border: 1px solid;
    border-color: #666 #ccc #ccc #666;
    box-shadow: inset 1px 1px #333;
  }
  input:checked::after {
    content: '';
    width: 5px;
    height: 9px;
    border: solid #000;
    border-width: 0 2px 2px 0;
    transform: rotate(40deg);
  }
`

const SelectBox = styled.div`
  display: grid;
  width: ${(props) => props.$width}px;
  height: 17px;
  align-items: center;
  border: 1px solid #000;
  box-shadow: 1px 1px #000;

  select {
    grid-area: 1 / 1;
    width: 100%;
    height: 15px;
    padding: 0 0 0 11px;
    border: 0;
    appearance: none;
    background: #fff;
  }
  svg {
    grid-area: 1 / 1;
    justify-self: end;
    z-index: 1;
    margin-right: 3px;
  }
`

const Choice = ({ id, label, value, width }) => (
  <Row $gap={6} $height={20}>
    <label htmlFor={id}>{label}</label>
    <SelectBox $width={width}>
      <select id={id} defaultValue={value}>
        <option>{value}</option>
      </select>
      <Arrow color="#000" size={9} />
    </SelectBox>
  </Row>
)

const options = ['透明', '记录时间信息', '循环', '描边', '捕捉光标', 'Explorer 2.0 兼容']

const GifRecorder = () => (
  <Recorder>
    <RecorderTitle>
      <Icon name="gif" />
      Gif-...
      <Controls>
        <button aria-label="minimize">
          <svg width="12" height="5"><path d="M.5 .5h11v4h-11z" fill="#fff" stroke="#556" /></svg>
        </button>
        <button aria-label="maximize">
          <svg width="11" height="9"><path d="M.5 .5h10v8h-10zM3.500 3.500h4v2h-4z" fill="#eef" stroke="#99a" /></svg>
        </button>
        <button aria-label="close">
          <svg width="12" height="9"><path d="M2 1l8 7M10 1l-8 7" stroke="#fff" strokeWidth="3" /></svg>
        </button>
      </Controls>
    </RecorderTitle>
    <Client>
      <MenuBar>
        <button>文件(F)</button>
        <button>编辑(E)</button>
      </MenuBar>
      <Banner>Unregistered Copy</Banner>
      <Row $gap={3} $height={26}>
        <RaisedButton $width={44} disabled>开始</RaisedButton>
        <RaisedButton $width={44} disabled>捕捉</RaisedButton>
        <RaisedButton $width={44}>停止</RaisedButton>
      </Row>
      <div>0 帧 (0 字节)</div>
      <Legend $top={15}>捕捉区域</Legend>
      <div>尺寸：1349x725</div>
      <div>左上角：8,3</div>
      <Row>
        <CheckLabel>
          <input type="checkbox" />
          显示区域
        </CheckLabel>
        <RaisedButton $width={70} disabled>选择区域</RaisedButton>
      </Row>
      <Row $height={26}>
        <RaisedButton $width={70}>刷新屏幕</RaisedButton>
      </Row>
      <Legend $top={17}>捕捉选项</Legend>
      <Choice id="rate" label="帧数/秒：" value="5 fps" width={63} />
      {options.map((text) => (
        <CheckLabel key={text}>
          <input type="checkbox" defaultChecked />
          {text}
        </CheckLabel>
      ))}
      <Choice id="scale" label="录制比例：" value="100%" width={57} />
    </Client>
    <Grip />
  </Recorder>
)

const App = () => {
  return (
    <AppStyles>
      <GlobalStyle />
      <QuickAccess />
      <Ribbon />
      <Workspace>
        <LeftNavigator />
        <Drawing />
      </Workspace>
      <GifRecorder />
    </AppStyles>
  )
}

export default App
